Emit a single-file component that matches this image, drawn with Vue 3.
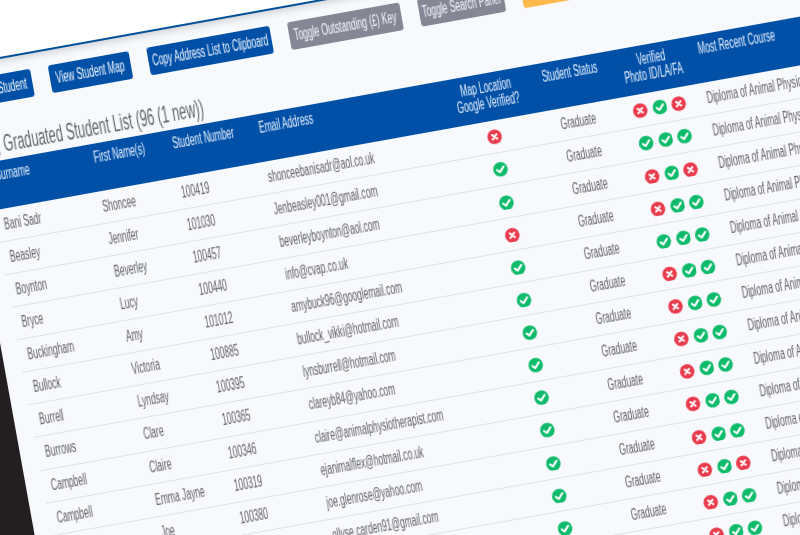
<template>
  <div class="stage">
    <div class="sheet">
      <div class="topband"></div>
      <div class="body">
        <div class="gutter"></div>
        <div class="panel">
          <!-- toolbar -->
          <div class="toolbar">
            <div
              v-for="b in buttons"
              :key="b.label"
              class="btn"
              :class="b.kind"
              :style="{ width: b.width + 'px' }"
            >
              <span class="nar">{{ b.label }}</span>
            </div>
          </div>

          <div class="title"><span class="nar">Past, Graduated Student List (96 (1 new))</span></div>

          <div class="table">
            <!-- header -->
            <div class="row head">
              <div class="cell"><span class="nar">Surname</span></div>
              <div class="cell"><span class="nar">First Name(s)</span></div>
              <div class="cell"><span class="nar">Student Number</span></div>
              <div class="cell"><span class="nar">Email Address</span></div>
              <div class="cell mid"><span class="nar">Map Location<br />Google Verified?</span></div>
              <div class="cell mid"><span class="nar">Student Status</span></div>
              <div class="cell mid"><span class="nar">Verified<br />Photo ID/LA/FA</span></div>
              <div class="cell course"><span class="nar">Most Recent Course</span></div>
            </div>

            <!-- rows -->
            <div class="row item" v-for="s in students" :key="s.num">
              <div class="cell"><span class="nar">{{ s.last }}</span></div>
              <div class="cell"><span class="nar">{{ s.first }}</span></div>
              <div class="cell"><span class="nar">{{ s.num }}</span></div>
              <div class="cell"><span class="nar">{{ s.email }}</span></div>
              <div class="cell mid icons">
                <svg class="ico" viewBox="0 0 16 16">
                  <circle cx="8" cy="8" r="8" :fill="s.map ? '#0dbb6b' : '#ea3b4c'" />
                  <path v-if="s.map" d="M4.2 8.3 7 11 11.9 5.5" class="tick" />
                  <path v-else d="M5.5 5.5 10.5 10.5M10.5 5.5 5.5 10.5" class="tick" />
                </svg>
              </div>
              <div class="cell mid"><span class="nar">Graduate</span></div>
              <div class="cell mid icons">
                <svg v-for="(ok, i) in s.checks" :key="i" class="ico" viewBox="0 0 16 16">
                  <circle cx="8" cy="8" r="8" :fill="ok ? '#0dbb6b' : '#ea3b4c'" />
                  <path v-if="ok" d="M4.2 8.3 7 11 11.9 5.5" class="tick" />
                  <path v-else d="M5.5 5.5 10.5 10.5M10.5 5.5 5.5 10.5" class="tick" />
                </svg>
              </div>
              <div class="cell course"><span class="nar">Diploma of Animal Physiotherapy</span></div>
            </div>
          </div>
        </div>
      </div>
    </div>
  </div>
</template>

<script setup>
const buttons = [
  { label: 'New Student', width: 61, kind: 'blue' },
  { label: 'View Student Map', width: 82, kind: 'blue' },
  { label: 'Copy Address List to Clipboard', width: 125, kind: 'blue' },
  { label: 'Toggle Outstanding (£) Key', width: 114, kind: 'grey' },
  { label: 'Toggle Search Panel', width: 86, kind: 'grey' },
  { label: '', width: 100, kind: 'amber' }
]

function row(last, first, num, email, map, a, b, c) {
  return { last, first, num, email, map: !!map, checks: [!!a, !!b, !!c] }
}

const students = [
  row('Bani Sadr', 'Shoncee', '100419', 'shonceebanisadr@aol.co.uk', 0, 0, 1, 0),
  row('Beasley', 'Jennifer', '101030', 'Jenbeasley001@gmail.com', 1, 1, 1, 1),
  row('Boynton', 'Beverley', '100457', 'beverleyboynton@aol.com', 1, 0, 1, 0),
  row('Bryce', 'Lucy', '100440', 'info@cvap.co.uk', 0, 0, 1, 1),
  row('Buckingham', 'Amy', '101012', 'amybuck96@googlemail.com', 1, 1, 1, 1),
  row('Bullock', 'Victoria', '100885', 'bullock_vikki@hotmail.com', 1, 0, 1, 1),
  row('Burrell', 'Lyndsay', '100395', 'lynsburrell@hotmail.com', 1, 0, 1, 1),
  row('Burrows', 'Clare', '100365', 'clareyb84@yahoo.com', 1, 0, 1, 1),
  row('Campbell', 'Claire', '100346', 'claire@animalphysiotherapist.com', 1, 0, 1, 1),
  row('Campbell', 'Emma Jayne', '100319', 'ejanimalflex@hotmail.co.uk', 1, 0, 1, 1),
  row('Glenrose', 'Joe', '100380', 'joe.glenrose@yahoo.com', 1, 0, 1, 1),
  row('Carden', 'Ellyse', '100402', 'ellyse.carden91@gmail.com', 1, 0, 1, 0),
  row('Carter', 'Anna', '100411', 'anna.carter@gmail.com', 1, 0, 1, 1),
  row('Clark', 'Emily', '100422', 'emily.clark@gmail.com', 1, 0, 1, 1)
]
</script>

<style>
html, body { margin: 0; background: #231f20; }
</style>

<style scoped>
.stage {
  width: 800px;
  height: 535px;
  overflow: hidden;
  background: #231f20;
  font-family: "Liberation Sans", sans-serif;
}

/* the whole page lies tilted in the picture */
.sheet {
  width: 1020px;
  height: 720px;
  display: flex;
  flex-direction: column;
  transform-origin: 0 0;
  transform: rotate(-10.2deg) translate(-120.7px, -18px);
  filter: blur(0.35px);
}
.topband {
  height: 74px;
  flex: none;
  background: #fff;
  border-bottom: 2px solid #034f98;
}
.body { flex: 1; display: flex; min-height: 0; }
.gutter { width: 60px; flex: none; }
.panel {
  flex: 1;
  background: #f8f9fd;
  box-shadow: inset 0 8px 8px -6px rgba(0, 0, 0, .18);
  padding-top: 15px;
  min-width: 0;
}

/* no gothic condensed face here, so squeeze the sans */
.nar {
  display: inline-block;
  white-space: nowrap;
  transform: scaleX(.535);
  transform-origin: left center;
}

.toolbar { display: flex; gap: 18px; padding-left: 17px; }
.btn {
  height: 28px;
  flex: none;
  display: flex;
  align-items: center;
  justify-content: center;
  border-radius: 3px;
  color: #f2f6fc;
  font-size: 16px;
}
.btn .nar { transform-origin: center; }
.btn.blue { background: #0150a8; }
.btn.grey { background: #868794; }
.btn.amber { background: #fdb94c; }

.title {
  margin-top: 26px;
  padding-left: 6.4px;
  height: 31px;
  line-height: 30px;
  font-size: 24.5px;
  color: #62666c;
}
.title .nar { transform: scaleX(.52); }

.table { margin-left: 17px; }
.row {
  display: grid;
  grid-template-columns: 100px 80px 88px 198.5px 80px 90px 75px 1fr;
}
.row.head {
  height: 47.5px;
  background: #0150a8;
  color: #e6effa;
  font-size: 16px;
  line-height: 16px;
}
.head .cell { padding-top: 6px; }
.row.item {
  height: 33.14px;
  box-sizing: border-box;
  border-bottom: 1px solid #dfe2e9;
  color: #616267;
  font-size: 16px;
  align-items: center;
}
.cell { padding-left: 8px; min-width: 0; box-sizing: border-box; }
/* flex so text wider than its track before the squeeze stays centred */
.cell.mid {
  padding-left: 0;
  display: flex;
  justify-content: center;
  text-align: center;
}
.cell.mid .nar { transform-origin: center; flex: none; height: fit-content; }
.cell.course { padding-left: 10.5px; }
.cell.icons {
  gap: 5px;
  padding-top: 2px;
}
.ico { width: 14.5px; height: 14.5px; flex: none; }
.tick {
  fill: none;
  stroke: #fff;
  stroke-width: 2.3;
  stroke-linecap: round;
  stroke-linejoin: round;
}
</style>
